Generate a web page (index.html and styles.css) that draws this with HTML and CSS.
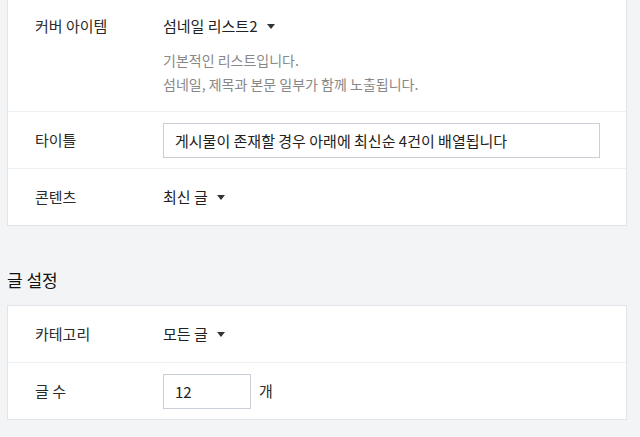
FILE: index.html
```html
<!DOCTYPE html>
<html>
<head>
  <link rel="stylesheet" href="styles.css">
</head>
<body>
  <div class="page">
    <div class="card card-top">
      <div class="row row-cover">
        <div class="label">커버 아이템</div>
        <div class="value">
          <div class="select">섬네일 리스트2 <span class="caret"></span></div>
          <p class="desc">기본적인 리스트입니다.<br>섬네일, 제목과 본문 일부가 함께 노출됩니다.</p>
        </div>
      </div>
      <div class="row">
        <div class="label">타이틀</div>
        <div class="value">
          <input type="text" class="text-input title-input" value="게시물이 존재할 경우 아래에 최신순 4건이 배열됩니다">
        </div>
      </div>
      <div class="row">
        <div class="label">콘텐츠</div>
        <div class="value">
          <div class="select">최신 글 <span class="caret"></span></div>
        </div>
      </div>
    </div>

    <h3 class="section-title">글 설정</h3>
    <div class="card">
      <div class="row">
        <div class="label">카테고리</div>
        <div class="value">
          <div class="select">모든 글 <span class="caret"></span></div>
        </div>
      </div>
      <div class="row">
        <div class="label">글 수</div>
        <div class="value inline">
          <input type="text" class="text-input count-input" value="12">
          <span class="unit">개</span>
        </div>
      </div>
    </div>
  </div>
</body>
</html>
```

FILE: styles.css
```css
body, html {
  margin: 0;
  padding: 0;
  background-color: #f3f4f6;
  font-family: "Noto Sans CJK KR", "Noto Sans", sans-serif;
  color: #333;
}

.page {
  padding: 0 13px 0 7px;
}

.card {
  background-color: white;
  border: 1px solid #e1e4e8;
}

.card-top {
  border-top: none;
}

.row {
  display: flex;
  align-items: center;
  min-height: 57px;
  padding: 0 27px;
  box-sizing: border-box;
  border-top: 1px solid #eef0f3;
  font-size: 15px;
  line-height: 20px;
}

.row:first-child {
  border-top: none;
  min-height: 56px;
}

.row-cover {
  align-items: flex-start;
  padding-top: 16px;
  padding-bottom: 15px;
}

.label {
  width: 128px;
  flex-shrink: 0;
  color: #2b2b2b;
}

.value {
  flex: 1;
}

.value.inline {
  display: flex;
  align-items: center;
}

.select {
  display: inline-flex;
  align-items: center;
  color: #222;
}

.caret {
  width: 0;
  height: 0;
  margin-left: 9px;
  border-left: 4px solid transparent;
  border-right: 4px solid transparent;
  border-top: 5px solid #333;
}

.desc {
  margin: 12px 0 0;
  font-size: 14px;
  line-height: 24px;
  color: #888;
}

.text-input {
  box-sizing: border-box;
  height: 35px;
  border: 1px solid #c9cfd6;
  padding: 0 11px;
  font-family: inherit;
  font-size: 15px;
  color: #222;
  background-color: white;
  outline: none;
}

.title-input {
  width: 437px;
}

.count-input {
  width: 88px;
}

.unit {
  margin-left: 8px;
  color: #2b2b2b;
}

.section-title {
  margin: 42px 0 13px;
  font-size: 17px;
  font-weight: normal;
  line-height: 24px;
  color: #111;
}
```
